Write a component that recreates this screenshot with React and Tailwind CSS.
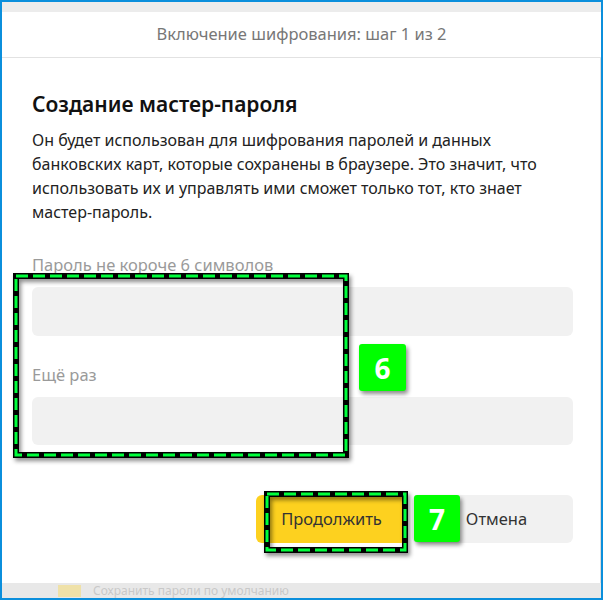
import React from "react";

const font = { fontFamily: '"Noto Sans", "Open Sans", sans-serif' };

// Green dashed frame used to mark areas of the dialog
const Marker = ({ className }) => (
  <svg className={`absolute pointer-events-none ${className}`} style={{ overflow: "visible" }}>
    <rect x="0" y="0" width="100%" height="100%" fill="none" stroke="#000" strokeWidth="6" style={{ filter: "drop-shadow(2px 3px 2px rgba(0,0,0,0.45))" }} />
    <rect x="0" y="0" width="100%" height="100%" fill="none" stroke="#00ff3c" strokeWidth="3" strokeDasharray="12 5" />
  </svg>
);

const Badge = ({ n, className }) => (
  <div className={`absolute flex items-center justify-center bg-[#00ff00] text-white font-bold text-[28px] rounded-[3px] shadow-[2px_3px_4px_rgba(0,0,0,0.45)] ${className}`}>
    {n}
  </div>
);

export default function App() {
  return (
    <div className="relative w-[603px] h-[600px] border-2 border-[#0b8fdc] bg-white overflow-hidden flex flex-col" style={font}>
      <div className="h-[10px] bg-[#ececec] shrink-0" />
      <div className="h-[46px] shrink-0 flex items-center justify-center border-b border-[#e2e2e2] text-[16.5px] text-[#777]">
        Включение шифрования: шаг 1 из 2
      </div>

      <div className="flex-1 pl-[30px] pr-[27px] pt-[32px] border-r border-[#dcdcdc]">
        <h1 className="text-[21px] font-semibold text-[#111] leading-[28px]">Создание мастер-пароля</h1>
        <p className="mt-[10px] text-[16px] leading-[24px] text-[#222] w-[530px]">
          Он будет использован для шифрования паролей и данных банковских карт, которые сохранены в браузере. Это значит, что использовать их и управлять ими сможет только тот, кто знает мастер-пароль.
        </p>

        <div className="mt-[31px] text-[16.5px] leading-[20px] text-[#9a9a9a]">Пароль не короче 6 символов</div>
        <div className="mt-[12px] h-[49px] rounded-[6px] bg-[#f1f1f1]" />

        <div className="mt-[29px] text-[16.5px] leading-[20px] text-[#9a9a9a]">Ещё раз</div>
        <div className="mt-[12px] h-[48px] rounded-[6px] bg-[#f1f1f1]" />

        <div className="mt-[50px] flex justify-end gap-[5px]">
          <button className="w-[151px] h-[48px] rounded-[6px] bg-[#fdd11f] text-[16.5px] text-[#333]">Продолжить</button>
          <button className="w-[161px] h-[48px] rounded-[6px] bg-[#f1f1f1] text-[16.5px] text-[#333] pl-[8px]">Отмена</button>
        </div>
      </div>

      <div className="h-[15px] shrink-0 bg-[#e8e8e8] flex items-center pl-[56px] gap-[12px] overflow-hidden">
        <div className="w-[23px] h-[12px] bg-[#efe1a8]" />
        <div className="text-[12px] leading-[14px] text-[#c8c8c8]">Сохранить пароли по умолчанию</div>
      </div>

      <Marker className="left-[14px] top-[274px] w-[330px] h-[179px]" />
      <Badge n="6" className="left-[357px] top-[342px] w-[47px] h-[47px]" />
      <Marker className="left-[265px] top-[492px] w-[138px] h-[56px]" />
      <Badge n="7" className="left-[412px] top-[493px] w-[46px] h-[47px]" />
    </div>
  );
}
